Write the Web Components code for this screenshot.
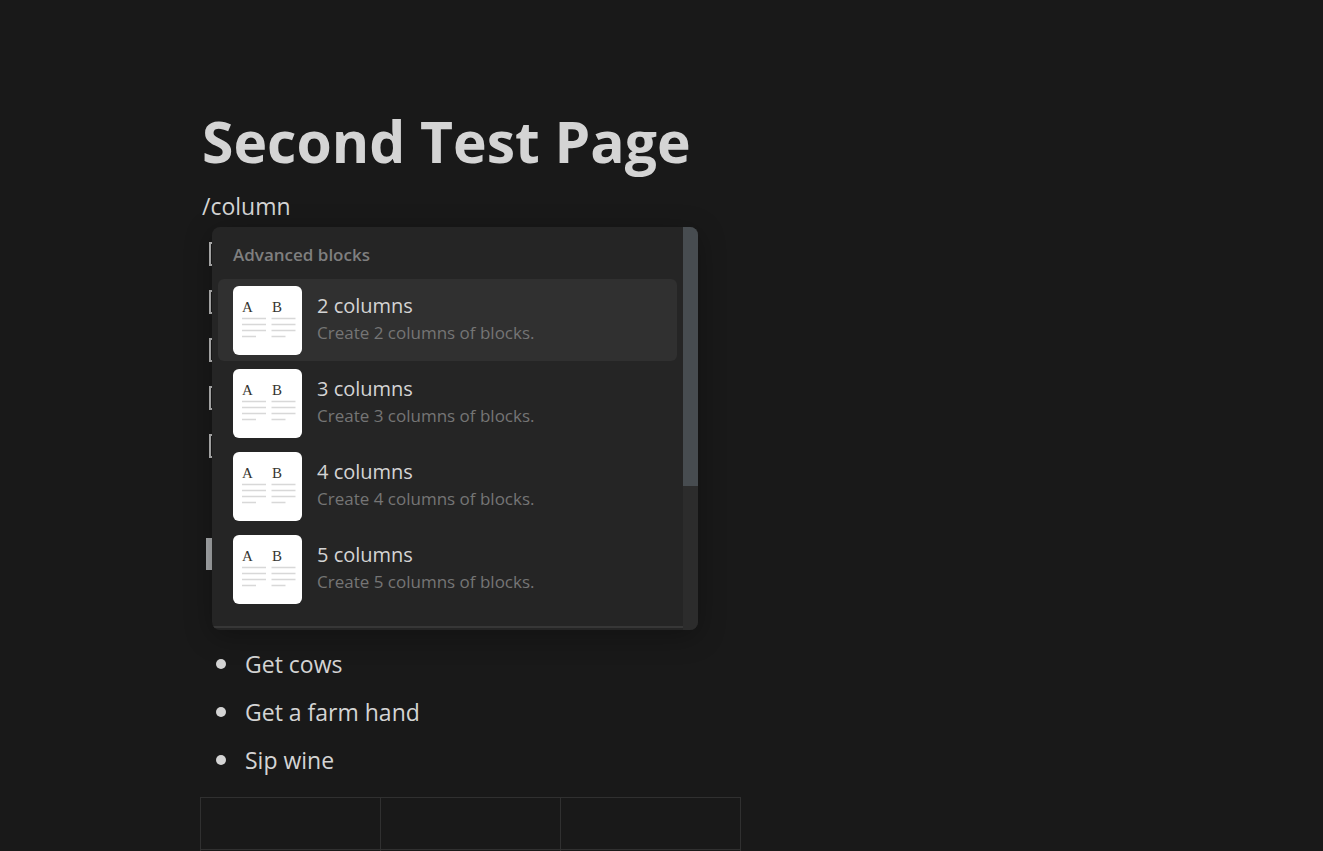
<!DOCTYPE html>
<html lang="en">
<head>
<meta charset="utf-8">
<title>Second Test Page</title>
<style>
  body { margin: 0; background: #191919; color: #d4d4d4; font-family: "Open Sans", "Noto Sans", sans-serif; }
</style>
</head>
<body>
<note-page>
  <span slot="title">Second Test Page</span>
  <command-line>/column
    <block-menu slot="menu" heading="Advanced blocks">
      <menu-item name="2 columns" hint="Create 2 columns of blocks." active></menu-item>
      <menu-item name="3 columns" hint="Create 3 columns of blocks."></menu-item>
      <menu-item name="4 columns" hint="Create 4 columns of blocks."></menu-item>
      <menu-item name="5 columns" hint="Create 5 columns of blocks."></menu-item>
    </block-menu>
  </command-line>
  <todo-list count="5"></todo-list>
  <section-mark></section-mark>
  <bullet-list>
    <bullet-item>Get cows</bullet-item>
    <bullet-item>Get a farm hand</bullet-item>
    <bullet-item>Sip wine</bullet-item>
  </bullet-list>
  <simple-table rows="2" columns="3"></simple-table>
</note-page>
<script>
const define = (name, render) => customElements.define(name, class extends HTMLElement {
  constructor() {
    super();
    this.attachShadow({ mode: "open" });
  }
  connectedCallback() {
    this.shadowRoot.innerHTML = render(this);
  }
});

define("note-page", () => `
  <style>
    :host { display: block; height: 100vh; overflow: hidden; }
    main { padding: 103px 200px 0; }
    h1 { margin: 0; padding: 0 2px; font-size: 57px; line-height: 76px; font-weight: 700; }
  </style>
  <main><h1><slot name="title"></slot></h1><slot></slot></main>`);

define("command-line", () => `
  <style>
    :host { display: block; position: relative; padding: 4px 2px 0; font-size: 23px; }
    p { margin: 0; line-height: 47px; }
    ::slotted(block-menu) { position: absolute; z-index: 1; left: 12px; top: 48px; }
  </style>
  <p><slot></slot></p><slot name="menu"></slot>`);

define("block-menu", el => `
  <style>
    :host { display: flex; width: 486px; height: 403px; border-radius: 8px; overflow: hidden;
      background: #252525; box-shadow: 0 6px 28px rgba(0,0,0,.3); line-height: 24px; }
    .body { flex: 1; min-width: 0; }
    h2 { margin: 0; padding: 16px 21px 12px; font-size: 17px; line-height: 24px; font-weight: 600; color: #7f7f7f; }
    .items { display: grid; gap: 1px; padding: 0 6px 16px; border-bottom: 2px solid #373737; }
    .track { width: 15px; background: #2c2c2c; }
    .thumb { height: 259px; background: #474c50; }
  </style>
  <div class="body"><h2>${el.getAttribute("heading")}</h2><div class="items"><slot></slot></div></div>
  <div class="track"><div class="thumb"></div></div>`);

define("menu-item", el => `
  <style>
    :host { display: block; }
    button { display: flex; gap: 15px; width: 100%; height: 82px; padding: 7px 15px 6px; border: 0;
      border-radius: 6px; background: transparent; color: #d4d4d4; font-family: inherit; text-align: left; }
    :host([active]) button { background: #303030; }
    svg { flex: none; width: 69px; height: 69px; border-radius: 6px; background: #fff; }
    .text { padding-top: 6px; }
    strong, small { display: block; }
    strong { font-size: 20px; line-height: 28px; font-weight: 500; }
    small { font-size: 17px; line-height: 26px; font-weight: 400; color: #757575; }
  </style>
  <button type="button">
    <svg viewBox="0 0 69 69" aria-hidden="true">
      <g font-family="Liberation Serif, serif" font-size="15" fill="#37352f">
        <text x="9" y="26">A</text><text x="39" y="26">B</text>
      </g>
      <path d="M9 32.5h24M9 38.5h24M9 44.5h24M9 50.5h14M38.5 32.5h24M38.5 38.5h24M38.5 44.5h24M38.5 50.5h14" stroke="#d8d8d8" stroke-width="1.3"/>
    </svg>
    <span class="text"><strong>${el.getAttribute("name")}</strong><small>${el.getAttribute("hint")}</small></span>
  </button>`);

define("todo-list", el => `
  <style>
    :host { display: block; }
    ul { margin: 0; padding: 0 9px; list-style: none; }
    li { display: flex; align-items: center; height: 48px; }
    input { appearance: none; width: 24px; height: 24px; margin: 0; border: 2px solid #b9b9b9; }
  </style>
  <ul>${'<li><input type="checkbox" aria-label="To-do"></li>'.repeat(+el.getAttribute("count"))}</ul>`);

define("section-mark", () => `
  <style>
    :host { display: block; padding: 68px 6px 70px; }
    div { width: 6px; height: 32px; background: #a8abad; }
  </style>
  <div></div>`);

define("bullet-list", () => `
  <style>
    :host { display: block; padding-bottom: 13px; }
    ul { margin: 0; padding: 0; }
  </style>
  <ul><slot></slot></ul>`);

define("bullet-item", () => `
  <style>
    :host { display: flex; align-items: center; gap: 19px; padding-left: 16px; font-size: 23px; line-height: 48px; }
    i { width: 10px; height: 10px; border-radius: 50%; background: #d4d4d4; }
  </style>
  <i></i><span><slot></slot></span>`);

define("simple-table", el => `
  <style>
    :host { display: block; }
    table { border-collapse: collapse; table-layout: fixed; width: 541px; }
    td { height: 51px; padding: 0; border: 1px solid #303030; }
  </style>
  <table>${("<tr>" + "<td></td>".repeat(+el.getAttribute("columns")) + "</tr>").repeat(+el.getAttribute("rows"))}</table>`);
</script>
</body>
</html>
